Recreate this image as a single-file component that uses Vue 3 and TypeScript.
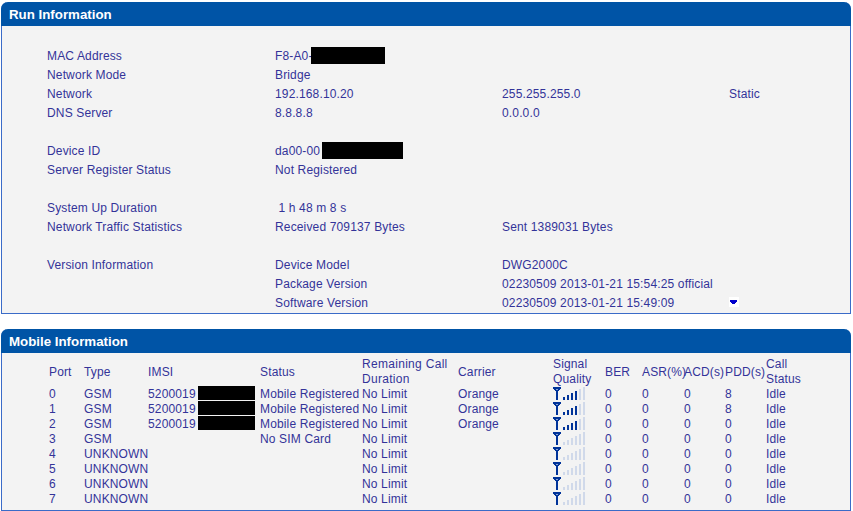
<script setup lang="ts">
interface InfoRow { cells: string[]; redact?: number; gap?: number; arrow?: boolean }
const info: InfoRow[] = [
  { cells: ['MAC Address', 'F8-A0-', '', ''], redact: 74, gap: -2 },
  { cells: ['Network Mode', 'Bridge', '', ''] },
  { cells: ['Network', '192.168.10.20', '255.255.255.0', 'Static'] },
  { cells: ['DNS Server', '8.8.8.8', '0.0.0.0', ''] },
  { cells: ['', '', '', ''] },
  { cells: ['Device ID', 'da00-00', '', ''], redact: 81, gap: 2 },
  { cells: ['Server Register Status', 'Not Registered', '', ''] },
  { cells: ['', '', '', ''] },
  { cells: ['System Up Duration', '\u00a01 h 48 m 8 s', '', ''] },
  { cells: ['Network Traffic Statistics', 'Received 709137 Bytes', 'Sent 1389031 Bytes', ''] },
  { cells: ['', '', '', ''] },
  { cells: ['Version Information', 'Device Model', 'DWG2000C', ''] },
  { cells: ['', 'Package Version', '02230509 2013-01-21 15:54:25 official', ''] },
  { cells: ['', 'Software Version', '02230509 2013-01-21 15:49:09', ''], arrow: true }
]
interface Port { port: number; type: string; imsi: boolean; status: string; carrier: string; level: number; pdd: number }
const ports: Port[] = [
  { port: 0, type: 'GSM', imsi: true, status: 'Mobile Registered', carrier: 'Orange', level: 4, pdd: 8 },
  { port: 1, type: 'GSM', imsi: true, status: 'Mobile Registered', carrier: 'Orange', level: 4, pdd: 8 },
  { port: 2, type: 'GSM', imsi: true, status: 'Mobile Registered', carrier: 'Orange', level: 4, pdd: 0 },
  { port: 3, type: 'GSM', imsi: false, status: 'No SIM Card', carrier: '', level: 0, pdd: 0 },
  { port: 4, type: 'UNKNOWN', imsi: false, status: '', carrier: '', level: 0, pdd: 0 },
  { port: 5, type: 'UNKNOWN', imsi: false, status: '', carrier: '', level: 0, pdd: 0 },
  { port: 6, type: 'UNKNOWN', imsi: false, status: '', carrier: '', level: 0, pdd: 0 },
  { port: 7, type: 'UNKNOWN', imsi: false, status: '', carrier: '', level: 0, pdd: 0 }
]
const bars = [1, 2, 3, 4, 5, 6]
</script>

<template>
  <div class="page">
    <section class="panel run">
      <h2 class="head">Run Information</h2>
      <div class="run-body">
        <div v-for="(r, i) in info" :key="i" class="run-row">
          <span>{{ r.cells[0] }}</span>
          <span class="with-box">{{ r.cells[1] }}<i v-if="r.redact" class="black" :style="{ width: r.redact + 'px', marginLeft: r.gap + 'px' }"></i></span>
          <span>{{ r.cells[2] }}</span>
          <span class="last">
            {{ r.cells[3] }}
            <b v-if="r.arrow" class="arrow"><svg width="10" height="10" viewBox="0 0 10 10"><path d="M1 3h7v2H7v1H6v1H3V6H2V5H1z" fill="#0000cc" /></svg></b>
          </span>
        </div>
      </div>
    </section>

    <section class="panel mobile">
      <h2 class="head">Mobile Information</h2>
      <div class="mob-body">
        <div class="mob-row mob-head">
          <span>Port</span><span>Type</span><span>IMSI</span><span>Status</span>
          <span class="wide">Remaining Call Duration</span><span>Carrier</span><span>Signal Quality</span>
          <span>BER</span><span>ASR(%)</span><span>ACD(s)</span><span>PDD(s)</span><span>Call Status</span>
        </div>
        <div v-for="p in ports" :key="p.port" class="mob-row">
          <span>{{ p.port }}</span>
          <span>{{ p.type }}</span>
          <span class="with-box"><template v-if="p.imsi">5200019<i class="black imsi"></i></template></span>
          <span>{{ p.status }}</span>
          <span>No Limit</span>
          <span>{{ p.carrier }}</span>
          <span class="sig">
            <svg width="33" height="13" viewBox="0 0 33 13">
              <path d="M0 0h8v2H7v1H6v1H5v9H3V4H2V3H1V2H0z" fill="#003399" />
              <path d="M3 2h2v1H3z" fill="#8fa6d6" />
              <rect v-for="b in bars" :key="b" :x="6 + b * 4" :y="13 - (b * 2 + 1)" width="2" :height="b * 2 + 1" :fill="b <= p.level ? '#003399' : '#d0d9ea'" />
            </svg>
          </span>
          <span>0</span><span>0</span><span>0</span>
          <span>{{ p.pdd }}</span>
          <span>Idle</span>
        </div>
      </div>
    </section>
  </div>
</template>

<style>
html, body { margin: 0; background: #fff; }
</style>

<style scoped>
.page {
  width: 853px;
  height: 511px;
  padding: 2px 2px 0 1px;
  box-sizing: border-box;
  display: flex;
  flex-direction: column;
  gap: 15px;
  font: 12px/15px "Liberation Sans", Arial, sans-serif;
  letter-spacing: 0.15px;
  color: #333399;
  overflow: hidden;
}
.panel {
  background: #f3f3f3;
  border: 1px solid #3a6bc8;
  border-top: 0;
  border-radius: 7px 7px 0 0;
}
.run { height: 312px; }
.mobile { height: 181px; }
.head {
  margin: 0 -1px;
  height: 24px;
  padding-left: 8px;
  background: #0054a6;
  color: #fff;
  font: bold 13.3px/25px "Liberation Sans", Arial, sans-serif;
  letter-spacing: 0;
  border-radius: 7px 7px 0 0;
}
.run-body { padding: 21px 0 0 45px; }
.run-row {
  display: grid;
  grid-template-columns: 228px 227px 227px 1fr;
  height: 19px;
  line-height: 19px;
}
.with-box { display: flex; align-items: flex-start; white-space: nowrap; }
.black { display: block; height: 17px; background: #000; }
.last { display: flex; align-items: flex-start; }
.arrow {
  display: block;
  width: 10px;
  height: 10px;
  margin-top: 3px;
  background: #fff;
}
.arrow svg { display: block; }
.mob-body { padding: 4px 0 0 47px; }
.mob-row {
  display: grid;
  grid-template-columns: 35px 64px 112px 102px 96px 95px 52px 37px 42px 41px 41px 42px;
  height: 15px;
  align-items: center;
  white-space: nowrap;
}
.mob-head { height: 30px; white-space: normal; }
.wide { letter-spacing: 0.3px; }
.imsi { width: 57px; height: 14px; margin-left: 2px; margin-top: -1px; }
.sig { height: 15px; }
.sig svg { display: block; }
</style>
